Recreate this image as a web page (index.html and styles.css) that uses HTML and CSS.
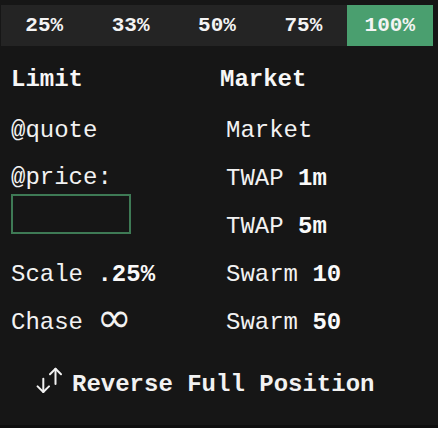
FILE: index.html
```html
<!DOCTYPE html>
<html>
<head>
<meta charset="utf-8">
<link rel="stylesheet" href="styles.css">
</head>
<body>
<div class="panel">
  <div class="pct-bar">
    <div class="pct">25%</div>
    <div class="pct">33%</div>
    <div class="pct">50%</div>
    <div class="pct">75%</div>
    <div class="pct active">100%</div>
  </div>
  <div class="cols">
    <div class="col left">
      <div class="heading">Limit</div>
      <div class="row">@quote</div>
      <div class="row price-label">@price:</div>
      <div class="price-box"></div>
      <div class="row scale">Scale <b>.25%</b></div>
      <div class="row">Chase <span class="inf">∞</span></div>
    </div>
    <div class="col right">
      <div class="heading">Market</div>
      <div class="list">
        <div class="row">Market</div>
        <div class="row">TWAP <b>1m</b></div>
        <div class="row">TWAP <b>5m</b></div>
        <div class="row">Swarm <b>10</b></div>
        <div class="row">Swarm <b>50</b></div>
      </div>
    </div>
  </div>
  <div class="reverse">
    <svg class="rev-icon" width="26" height="26" viewBox="0 0 26 26" fill="none" stroke="#f2f2f2" stroke-width="2" stroke-linecap="round" stroke-linejoin="round">
      <path d="M7.3 11.7V25"/>
      <path d="M1.6 19.4L7.3 25L13 19.4"/>
      <path d="M19.5 1.8V17"/>
      <path d="M14 7.2L19.5 1.8L25 7.2"/>
    </svg>
    <span class="rev-text">Reverse Full Position</span>
  </div>
</div>
<div class="footer">
  <div class="foot-a"></div>
  <div class="foot-b"></div>
</div>
</body>
</html>
```
FILE: styles.css
```css
html, body {
  margin: 0;
  padding: 0;
  background: #161616;
}
body {
  width: 438px;
  height: 428px;
  overflow: hidden;
  font-family: "Liberation Mono", "DejaVu Sans Mono", monospace;
  color: #f2f2f2;
  font-size: 24px;
}
.panel {
  height: 420px;
}
.pct-bar {
  display: flex;
  margin: 5px 5px 0 1px;
  height: 41px;
  background: #242424;
}
.pct {
  flex: 1;
  display: flex;
  align-items: center;
  justify-content: center;
  font-size: 21px;
  font-weight: bold;
  color: #f4f4f4;
}
.pct.active {
  background: #4a9f6f;
}
.cols {
  display: grid;
  grid-template-columns: 209px 1fr;
  padding-left: 11px;
  padding-top: 20px;
}
.heading {
  font-weight: bold;
  line-height: 28px;
  height: 28px;
  margin-bottom: 13px;
  color: #f7f7f7;
}
.row {
  line-height: 48px;
  height: 48px;
  white-space: nowrap;
}
.row b {
  font-weight: bold;
  color: #fafafa;
}
.list {
  padding-left: 6px;
}
.price-label {
  line-height: 32px;
  height: 32px;
  padding-top: 7px;
}
.price-box {
  width: 120px;
  height: 40px;
  box-sizing: border-box;
  border: 2px solid #3e7a55;
  margin-bottom: 17px;
}
.inf {
  font-family: "DejaVu Sans", sans-serif;
  font-size: 42px;
  font-weight: normal;
  line-height: 0;
  vertical-align: -3px;
  margin-left: -1px;
}
.reverse {
  display: flex;
  align-items: center;
  gap: 10px;
  padding-left: 36px;
  margin-top: 14px;
  height: 48px;
}
.rev-icon {
  margin-bottom: 10px;
}
.rev-text {
  font-weight: bold;
  line-height: 48px;
}
.footer {
  height: 8px;
  background: #0e0e0e;
  display: flex;
  align-items: flex-end;
}
.foot-a {
  margin-left: 173px;
  width: 113px;
  height: 4px;
  background: #1b1b1b;
}
.foot-b {
  margin-left: 54px;
  flex: 1;
  height: 4px;
  background: #1b1b1b;
}
```
